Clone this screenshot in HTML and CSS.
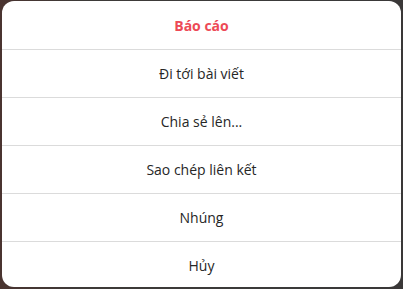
FILE: index.html
```html
<!DOCTYPE html>
<html lang="vi">
<head>
<meta charset="utf-8">
<link rel="stylesheet" href="styles.css">
</head>
<body>
<div class="backdrop">
  <div class="dialog">
    <button class="item danger">Báo cáo</button>
    <button class="item">Đi tới bài viết</button>
    <button class="item">Chia sẻ lên...</button>
    <button class="item">Sao chép liên kết</button>
    <button class="item">Nhúng</button>
    <button class="item">Hủy</button>
  </div>
</div>
</body>
</html>
```
FILE: styles.css
```css
html, body {
  margin: 0;
  padding: 0;
  height: 100%;
}
body {
  background: #3b3735;
  font-family: "Open Sans", "Noto Sans", "Liberation Sans", sans-serif;
}
.backdrop {
  padding: 1px 2px 2px 2px;
  height: 100%;
  box-sizing: border-box;
  background: linear-gradient(90deg, #4a3430 0%, #3d3a38 20%, #3a3a3a 80%, #3a3838 100%);
}
.dialog {
  background: #fff;
  border-radius: 12px;
  width: 399px;
  height: 286px;
  display: flex;
  flex-direction: column;
  overflow: hidden;
}
.item {
  flex: 0 0 48px;
  height: 48px;
  border: 0;
  border-top: 1px solid #dbdbdb;
  background: transparent;
  font-family: inherit;
  font-size: 14px;
  color: #262626;
  padding: 0 8px;
  margin: 0;
  text-align: center;
}
.item:first-child {
  border-top: 0;
}
.item.danger {
  color: #ed4956;
  font-weight: 700;
}
```
